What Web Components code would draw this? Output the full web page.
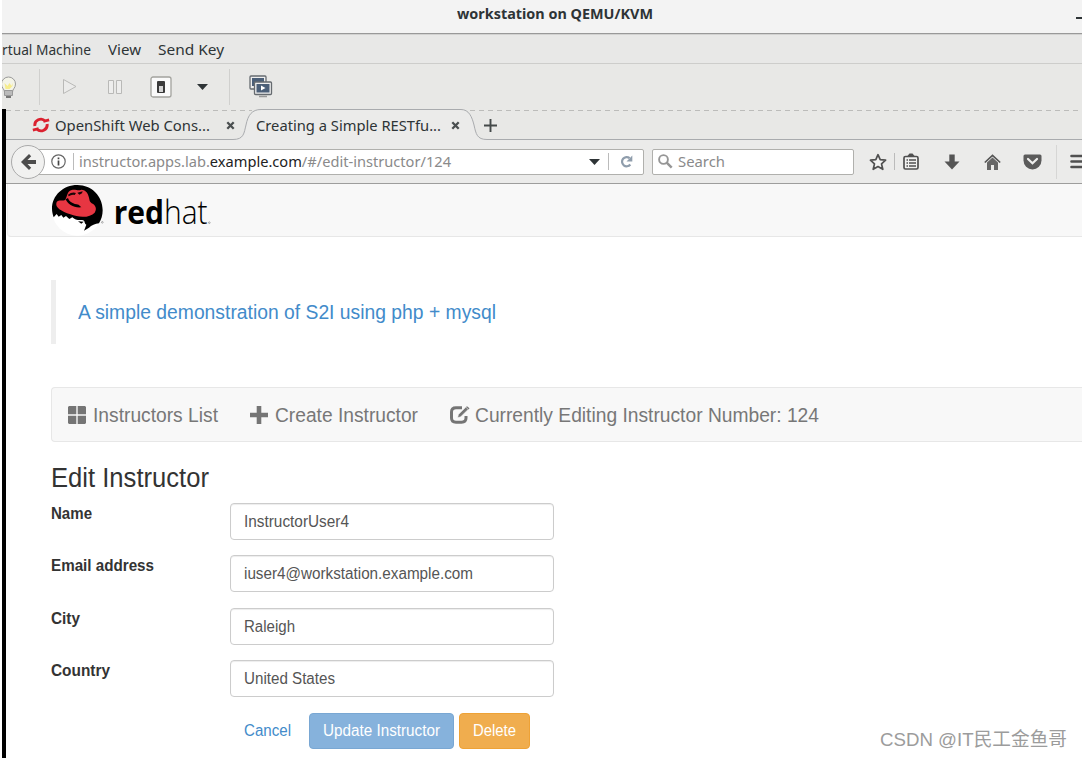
<!DOCTYPE html>
<html lang="en">
<head>
<meta charset="utf-8">
<title>workstation on QEMU/KVM</title>
<style>
    html, body { margin: 0; height: 100%; overflow: hidden; background: #fff; }
    body { font-family: "Noto Sans", "Open Sans", sans-serif; font-size: 14.5px; color: #2e3436; }
</style>
</head>
<body>
<vm-window></vm-window>

<script>
// text with an optional fixed run width, condensed or stretched to fill it
class FitText extends HTMLElement {
    constructor() {
        super();
        this.attachShadow({ mode: "open" });
        this.shadowRoot.innerHTML = `
            <style>
                :host { display: inline-block; flex: none; white-space: nowrap; }
                span { display: inline-block; transform-origin: 0 50%; }
            </style>
            <span><slot></slot></span>
        `;
    }

    connectedCallback() {
        const width = Number(this.getAttribute("width"));
        if (!width) return;
        const span = this.shadowRoot.querySelector("span");
        const natural = span.getBoundingClientRect().width;
        span.style.transform = `scaleX(${width / natural})`;
        this.style.width = width + "px";
    }
}

const ICONS = {
    bulb: [14, 24, `<path d="M-6 8a7 7 0 1 1 14 0c0 4-3 5-3 8h-8c0-3-3-4-3-8z" transform="translate(5.500 1)" fill="#f4f4e8" stroke="#999" /><path d="M2.500 8l3 3 2-3 2 3 1-3v3l-3 3h-4z" fill="#f6ec8c"/><rect x="2" y="15" width="9" height="6" rx="1" fill="#999"/><path d="M3 17h7M3 19h7" stroke="#ddd"/><path d="M4 22h5" stroke="#777" stroke-width="2"/>`],
    play: [16, 17, `<path d="M1.500 1.500v14L14 8.500z" fill="#ebebea" stroke="#b9b9b7"/>`],
    pause: [14, 14, `<path d="M.5.5h5v13h-5zM8.500.5h5v13h-5z" fill="#eeeeed" stroke="#b9b9b7"/>`],
    power: [22, 22, `<rect x="1" y="1" width="20" height="20" rx="2" fill="#fafafa" stroke="#a3a39e" stroke-width="1.300"/><rect x="7" y="5" width="8" height="12" rx="1" fill="#3b3b3b"/><rect x="9" y="10" width="4" height="6" fill="#d4d4d4"/>`],
    caret: [11, 6, `<path d="M0 0h11L5.500 6z" fill="#2e3436"/>`],
    screens: [24, 23, `<rect x="1" y="1" width="16" height="13" rx="1" fill="#eee" stroke="#666b70" stroke-width="1.300"/><rect x="3" y="3" width="12" height="8" fill="#4b5f78"/><rect x="5.500" y="7" width="17" height="12.500" rx="1" fill="#eee" stroke="#666b70" stroke-width="1.300"/><rect x="7.500" y="9" width="13" height="8.500" fill="#4b5f78"/><path d="M12 10.500v5l4.500-2.500z" fill="#fff"/><path d="M10 21.500h8" stroke="#999" stroke-width="1.500"/>`],
    openshift: [18, 16, `<path d="M2.900 9A6 5.900 0 0 1 13.300 4.200M15.100 7A6 5.900 0 0 1 4.700 11.800" fill="none" stroke="#db212f" stroke-width="2.900"/><path d="M11.500 5.800l6-1.600-.7-2.700-4.500 1.300zM6.500 10.200l-6 1.600.7 2.700 4.500-1.300z" fill="#db212f"/>`],
    close: [9, 9, `<path d="M1.300 1.300l6.400 6.400M7.700 1.300L1.300 7.700" stroke="#4a4f50" stroke-width="2.300"/>`],
    plus: [13, 13, `<path d="M6.500 0v13M0 6.500h13" stroke="#444949" stroke-width="1.900"/>`],
    back: [15, 16, `<path d="M8 0L0 8l8 8 2.200-2.200L6.500 10H15V6H6.500l3.700-3.800z" fill="#4c4c4c"/>`],
    info: [15, 15, `<circle cx="7.500" cy="7.500" r="6.700" fill="none" stroke="#666" stroke-width="1.200"/><path d="M7.500 6.500v5M7.500 3.500v1.700" stroke="#444" stroke-width="1.700"/>`],
    reload: [13, 13, `<path d="M10.300 9.500A4.600 4.600 0 1 1 9.600 3.200" fill="none" stroke="#8f9dac" stroke-width="2.200"/><path d="M12.300.5v6H6.500z" fill="#8f9dac"/>`],
    search: [15, 15, `<circle cx="5.500" cy="5.500" r="4.400" fill="none" stroke="#969696" stroke-width="1.900"/><path d="M8.700 8.700l5 5" stroke="#969696" stroke-width="2.500"/>`],
    star: [18, 18, `<path d="M9 1.700l2.200 5 5.400.5-4.100 3.700 1.300 5.400L9 13.500l-4.800 2.800 1.300-5.400-4.100-3.700 5.400-.5z" fill="#f3f3f2" stroke="#505050" stroke-width="1.700" stroke-linejoin="round"/>`],
    list: [16, 17, `<rect x="1" y="3.500" width="14" height="12.500" rx="1.500" fill="#f1f1f0" stroke="#505050" stroke-width="1.700"/><path d="M4 3.500L6.500.5h3L12 3.500z" fill="#505050"/><path d="M3.500 7h1.500M6 7h7M3.500 10h1.500M6 10h7M3.500 13h1.500M6 13h7" stroke="#505050" stroke-width="1.400"/>`],
    download: [16, 16, `<path d="M5.300.5h5.400V7.500H15.500L8 15.500.5 7.500h4.800z" fill="#555"/>`],
    home: [17, 16, `<path d="M.8 8.500L8.500 1.300l7.700 7.200" fill="none" stroke="#555" stroke-width="1.700"/><path d="M3 8.500l5.500-5 5.500 5V16h-4v-5H7v5H3z" fill="#666"/>`],
    pocket: [19, 16, `<path d="M2 .5h15q1.500 0 1.500 1.500v4.500a9 9 0 0 1-18 0V2Q.5.500 2 .5z" fill="#5b5b5b"/><path d="M5 5l4.500 4.300L14 5" fill="none" stroke="#efefee" stroke-width="2.200" stroke-linecap="round"/>`],
    menu: [18, 15, `<path d="M1.500 2h17M1.500 7.500h17M1.500 13h17" stroke="#505050" stroke-width="2.600" stroke-linecap="round"/>`],
    grid: [18, 18, `<path d="M1 0h7.300v8.200H0V1zM9.700 0H17l1 1v7.200H9.700zM0 9.700h8.300V18H1l-1-1zM9.700 9.700H18V17l-1 1H9.700z" fill="#757575"/>`],
    add: [18, 18, `<path d="M6.700 0h4.600v6.700H18v4.600h-6.700V18H6.700v-6.700H0V6.700h6.700z" fill="#757575"/>`],
    edit: [20, 18, `<path d="M12 1.800H6Q1.500 1.800 1.500 6v6Q1.500 16.200 6 16.200h5.500q4.500 0 4.500-4.200v-2" fill="none" stroke="#757575" stroke-width="3"/><path d="M7.500 12l.8-3.600L15.800 1l2.500 2.400-7.500 7.400z" fill="#757575" stroke="#f8f8f8" stroke-width=".8"/><path d="M17 .3l2.500 2-1 1.200L16 1z" fill="#757575"/>`]
};

class UiIcon extends HTMLElement {
    constructor() {
        super();
        this.attachShadow({ mode: "open" });
    }

    connectedCallback() {
        const [w, h, shape] = ICONS[this.getAttribute("name")];
        this.shadowRoot.innerHTML = `
            <style>
                :host { display: block; flex: none; }
                svg { display: block; }
            </style>
            <svg width="${w}" height="${h}" viewBox="0 0 ${w} ${h}">${shape}</svg>
        `;
    }
}

class VmWindow extends HTMLElement {
    constructor() {
        super();
        this.attachShadow({ mode: "open" });
        this.shadowRoot.innerHTML = `
            <style>
                :host { display: flex; flex-direction: column; height: 758px; padding-left: 2px; box-sizing: border-box; overflow: hidden; position: relative; background: #fff; }
                .title { display: flex; align-items: center; height: 33px; box-sizing: border-box; padding: 0 0 6px 455px; font-weight: bold; font-size: 14px; background: #f3f3f3; }
                .min { margin: 8px 0 0 423px; width: 6px; height: 2px; background: #2e3436; }
                .menu { display: flex; align-items: center; gap: 17px; height: 31px; box-sizing: border-box; padding-top: 1px; border-top: 1px solid #999; border-bottom: 1px solid #cdcdcb; background: #e8e8e7; box-shadow: inset 0 1px #d2d2d1; }
                .tools { display: flex; align-items: center; height: 45px; background: #e8e8e6; }
                .sep { width: 1px; height: 36px; background: #d0d0ce; }
                .screen { flex: 1; min-height: 0; border-left: 4px solid #000; display: flex; }
                browser-window { flex: 1; min-width: 0; }
                .mark { position: absolute; left: 880px; top: 726px; font: 19px/27px "Liberation Sans", "Noto Sans CJK SC", sans-serif; color: #9c9c9c; }
            </style>
            <div class="title"><fit-text width="196">workstation on QEMU/KVM</fit-text><div class="min"></div></div>
            <div class="menu"><fit-text width="89">rtual Machine</fit-text><fit-text width="33">View</fit-text><fit-text width="66">Send Key</fit-text></div>
            <div class="tools">
                <ui-icon name="bulb"></ui-icon>
                <div class="sep" style="margin-left: 23px"></div>
                <ui-icon name="play" style="margin-left: 22px"></ui-icon>
                <ui-icon name="pause" style="margin-left: 30px"></ui-icon>
                <ui-icon name="power" style="margin-left: 28px"></ui-icon>
                <ui-icon name="caret" style="margin-left: 25px"></ui-icon>
                <div class="sep" style="margin-left: 21px"></div>
                <ui-icon name="screens" style="margin-left: 19px"></ui-icon>
            </div>
            <div class="screen"><browser-window></browser-window></div>
            <fit-text class="mark" width="187">CSDN @IT民工金鱼哥</fit-text>
        `;
    }
}

class BrowserWindow extends HTMLElement {
    constructor() {
        super();
        this.attachShadow({ mode: "open" });
        this.shadowRoot.innerHTML = `
            <style>
                :host { display: flex; flex-direction: column; }
                .tabs { display: flex; align-items: center; height: 31px; padding: 1px 0 0 26px; box-sizing: border-box; background: #e8e8e6; position: relative; }
                .shape { position: absolute; left: 0; top: 0; }
                .tabs > :not(.shape) { position: relative; }
                .nav { display: flex; align-items: center; height: 44px; box-sizing: border-box; border-bottom: 1px solid #9d9d9c; padding: 0 0 0 5px; background: #ebebea; }
                .nav > * { flex: none; }
                .back { width: 34px; height: 34px; box-sizing: border-box; border: 1px solid #aaa; border-radius: 50%; background: #f1f1f0; display: flex; align-items: center; justify-content: center; position: relative; }
                .field { display: flex; align-items: center; height: 26px; box-sizing: border-box; border: 1px solid #b0b0ad; border-radius: 2px; background: #fff; color: #8a8a8a; }
                .field fit-text { margin-bottom: 2px; }
                .url { width: 616px; margin-left: -17px; padding-left: 22px; }
                .url b { font-weight: normal; color: #222; }
                .line { width: 1px; height: 17px; background: #bbb; }
                .search { width: 202px; margin-left: 8px; padding-left: 5px; gap: 5px; }
                web-page { flex: 1; min-height: 0; }
            </style>
            <div class="tabs">
                <svg class="shape" width="1076" height="31" viewBox="0 0 1076 31">
                    <path d="M0 1.500H246M464 1.500H1076" stroke="#bcbcba" stroke-dasharray="5 4"/>
                    <path d="M0 30.500H227C238 30.500 238 24 240 16C242 6 246 .5 255 .5H455C463 .5 466 8 468 16C470 25 471 30.500 481 30.500H1076V31H0z" fill="#ebebea"/>
                    <path d="M0 30.500H227C238 30.500 238 24 240 16C242 6 246 .5 255 .5H455C463 .5 466 8 468 16C470 25 471 30.500 481 30.500H1076" fill="none" stroke="#a9abae"/>
                </svg>
                <ui-icon name="openshift"></ui-icon>
                <fit-text width="155" style="margin-left: 5px">OpenShift Web Cons...</fit-text>
                <ui-icon name="close" style="margin-left: 16px"></ui-icon>
                <fit-text width="185" style="margin-left: 21px">Creating a Simple RESTfu...</fit-text>
                <ui-icon name="close" style="margin-left: 10px"></ui-icon>
                <ui-icon name="plus" style="margin-left: 24px"></ui-icon>
            </div>
            <div class="nav">
                <div class="back"><ui-icon name="back"></ui-icon></div>
                <div class="field url">
                    <ui-icon name="info"></ui-icon>
                    <div class="line" style="margin-left: 7px"></div>
                    <fit-text width="372" style="margin-left: 5px">instructor.apps.lab.<b>example.com</b>/#/edit-instructor/124</fit-text>
                    <ui-icon name="caret" style="margin-left: 138px"></ui-icon>
                    <div class="line" style="margin-left: 8px"></div>
                    <ui-icon name="reload" style="margin-left: 11px"></ui-icon>
                </div>
                <div class="field search"><ui-icon name="search"></ui-icon><fit-text width="47">Search</fit-text></div>
                <ui-icon name="star" style="margin-left: 15px"></ui-icon>
                <div class="line" style="margin-left: 7px"></div>
                <ui-icon name="list" style="margin-left: 8px"></ui-icon>
                <ui-icon name="download" style="margin-left: 25px"></ui-icon>
                <ui-icon name="home" style="margin-left: 24px"></ui-icon>
                <ui-icon name="pocket" style="margin-left: 22px"></ui-icon>
                <div class="line" style="margin-left: 14px; height: 34px; background: #d6d6d5"></div>
                <ui-icon name="menu" style="margin-left: 13px"></ui-icon>
            </div>
            <web-page></web-page>
        `;
    }
}

class RedhatLogo extends HTMLElement {
    constructor() {
        super();
        this.attachShadow({ mode: "open" });
        this.shadowRoot.innerHTML = `
            <style>
                :host { display: block; }
                svg { display: block; }
                text { font-family: "Open Sans", sans-serif; font-size: 97px; }
            </style>
            <svg width="180" height="52" viewBox="33 12 540 156">
                <circle cx="112" cy="91" r="76" fill="#fff"/>
                <path d="M41 112C22 62 60 15 112 15C156 15 188 49 188 91C188 106 184 119 177 130C166 131 154 136 147 143L132 152L139 134C130 128 138 122 126 120C116 121 104 120 97 112L88 117L78 108L70 113L64 105L56 110L50 102z" fill="#000"/>
                <path d="M50 66C56 58 70 64 76 59C82 48 82 30 98 29C110 28 114 34 124 29C138 29 146 42 148 58C149 63 150 66 155 70C168 76 171 88 164 98C151 113 118 114 91 103C65 94 43 83 50 66z" fill="#e73642"/>
                <path d="M77 58C82 72 103 85 124 82L116 74C100 72 88 66 84 54z" fill="#000"/>
                <path d="M84 44q12-9 24-5l-4 6q-8-3-18 4zM112 38l16-4-2 6-8 4z" fill="#180507"/>
                <path d="M114 124l17 1-7 6z" fill="#000"/>
                <text x="221" y="131" textLength="282" lengthAdjust="spacingAndGlyphs"><tspan font-weight="700">red</tspan><tspan font-weight="300">hat</tspan></text>
                <circle cx="508" cy="128" r="2.500" fill="none" stroke="#888" stroke-width="2"/>
                <circle cx="187" cy="127" r="2.500" fill="none" stroke="#888" stroke-width="2"/>
            </svg>
        `;
    }
}

class FormRow extends HTMLElement {
    constructor() {
        super();
        this.attachShadow({ mode: "open" });
    }

    connectedCallback() {
        const [labelWidth, valueWidth] = this.getAttribute("widths").split(" ");
        this.shadowRoot.innerHTML = `
            <style>
                :host { display: grid; grid-template-columns: 179px 324px; height: 37px; }
                .label { font-weight: bold; line-height: 22px; color: #333; }
                .input { display: flex; align-items: center; height: 37px; box-sizing: border-box; padding: 1px 0 0 13px; border: 1px solid #ccc; border-radius: 4px; box-shadow: inset 0 1px 1px rgba(0,0,0,.075); color: #555; }
            </style>
            <fit-text class="label" width="${labelWidth}">${this.getAttribute("label")}</fit-text>
            <div class="input"><fit-text width="${valueWidth}">${this.textContent}</fit-text></div>
        `;
    }
}

class WebPage extends HTMLElement {
    constructor() {
        super();
        this.attachShadow({ mode: "open" });
        this.shadowRoot.innerHTML = `
            <style>
                :host { display: block; padding-left: 1px; background: #fff; font-family: "Liberation Sans", Arial, sans-serif; font-size: 16px; color: #333; overflow: hidden; }
                header { height: 53px; box-sizing: border-box; border-bottom: 1px solid #e7e7e7; border-left: 1px solid #eee; border-bottom-left-radius: 4px; padding-left: 43px; background: #f8f8f8; }
                main { padding-left: 44px; }
                blockquote { margin: 43px 0; height: 64px; box-sizing: border-box; border-left: 5px solid #eee; padding-left: 22px; font-size: 20px; line-height: 65px; color: #428bca; }
                nav { display: flex; align-items: center; height: 55px; box-sizing: border-box; border: 1px solid #e7e7e7; border-right: 0; border-radius: 4px 0 0 4px; background: #f8f8f8; padding-left: 16px; font-size: 20px; color: #777; }
                nav fit-text { margin: 1px 31px 0 7px; }
                nav ui-icon:nth-of-type(2) { margin-left: 1px; }
                h3 { margin: 20px 0 10px; height: 31px; line-height: 33px; font-size: 27px; font-weight: normal; }
                .form { display: grid; row-gap: 15.4px; }
                .buttons { display: flex; margin: 16px 0 0 179px; }
                .btn { height: 36px; box-sizing: border-box; display: flex; align-items: center; justify-content: center; border: 1px solid transparent; border-radius: 4px; color: #fff; }
                .link { width: 75px; color: #428bca; }
                .primary { width: 145px; margin-left: 4px; background: #86b2dc; border-color: #79a7d3; }
                .warning { width: 71px; margin-left: 5px; background: #f0ad4e; border-color: #eea236; }
            </style>
            <header><redhat-logo></redhat-logo></header>
            <main>
                <blockquote><fit-text width="418">A simple demonstration of S2I using php + mysql</fit-text></blockquote>
                <nav>
                    <ui-icon name="grid"></ui-icon><fit-text width="125">Instructors List</fit-text>
                    <ui-icon name="add"></ui-icon><fit-text width="143">Create Instructor</fit-text>
                    <ui-icon name="edit" style="margin-left: 1px"></ui-icon><fit-text width="344" style="margin-left: 5px">Currently Editing Instructor Number: 124</fit-text>
                </nav>
                <h3><fit-text width="158">Edit Instructor</fit-text></h3>
                <div class="form">
                    <form-row label="Name" widths="41 105">InstructorUser4</form-row>
                    <form-row label="Email address" widths="103 229">iuser4@workstation.example.com</form-row>
                    <form-row label="City" widths="29 51">Raleigh</form-row>
                    <form-row label="Country" widths="59 91">United States</form-row>
                </div>
                <div class="buttons">
                    <div class="btn link"><fit-text width="47">Cancel</fit-text></div>
                    <div class="btn primary"><fit-text width="117">Update Instructor</fit-text></div>
                    <div class="btn warning"><fit-text width="43">Delete</fit-text></div>
                </div>
            </main>
        `;
    }
}

customElements.define("ui-icon", UiIcon);
customElements.define("redhat-logo", RedhatLogo);
customElements.define("form-row", FormRow);
customElements.define("web-page", WebPage);
customElements.define("browser-window", BrowserWindow);
customElements.define("vm-window", VmWindow);
// last, so every run is measured inside its final styles
customElements.define("fit-text", FitText);
</script>
</body>
</html>
